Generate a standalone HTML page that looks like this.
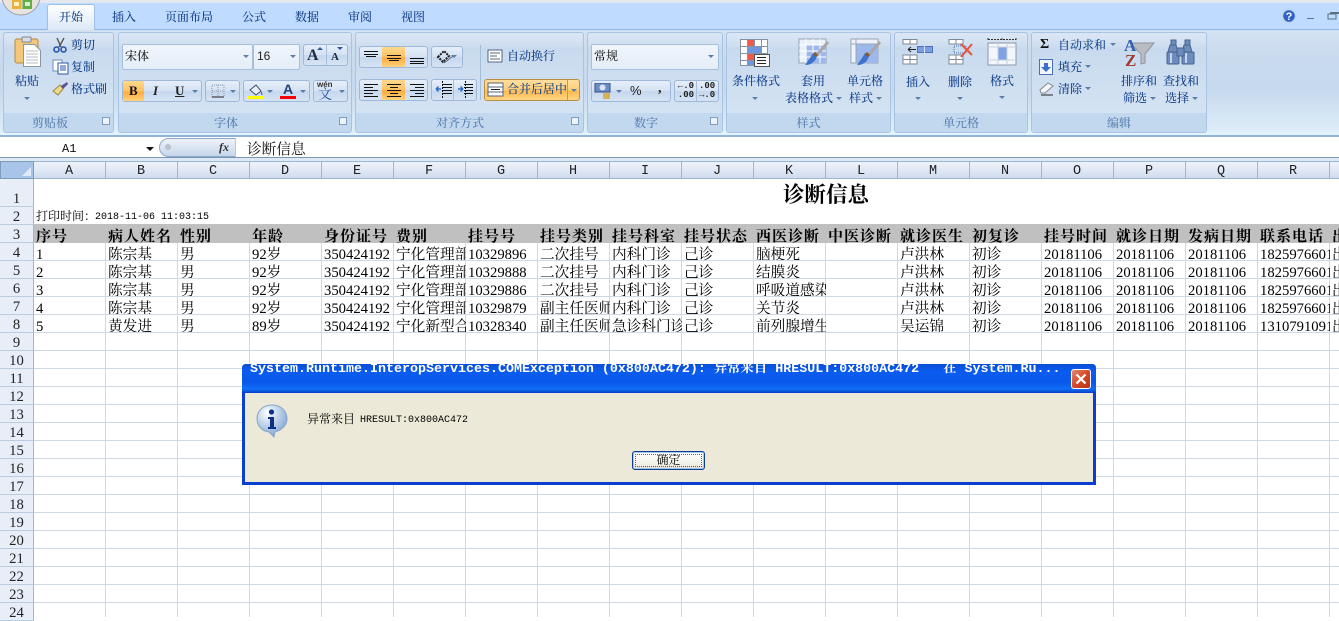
<!DOCTYPE html>
<html lang="zh"><head><meta charset="utf-8"><title>Excel</title>
<style>
html,body{margin:0;padding:0}
body{width:1339px;height:617px;overflow:hidden;position:relative;background:#fff;font-family:"Liberation Serif","Noto Serif CJK SC",serif}
.a{position:absolute}
.t{position:absolute;font-size:12px;line-height:14px;color:#15428b;white-space:nowrap;font-family:"Noto Serif CJK SC",serif;font-weight:500}
.tab{top:10px;color:#15428b}
.g{position:absolute;top:32px;height:101px;box-sizing:border-box;border:1px solid #a9c4e2;border-radius:3px;background:linear-gradient(#dbe7f5 0,#d0dff0 12px,#c8daee 15px,#d4e3f3 80px);overflow:hidden}
.g:after{content:"";position:absolute;left:0;right:0;bottom:0;height:19px;background:#c1d8ef}
.gl{top:116px;color:#5a7fb0;font-size:12px;text-align:center}
.cb{position:absolute;box-sizing:border-box;border:1px solid #a6bfdd;border-radius:2px;background:linear-gradient(#f0f5fc,#e4edf8)}
.bt{position:absolute;box-sizing:border-box;border:1px solid #9db8d8;border-radius:3px;background:linear-gradient(#e6eefa 0,#d5e2f3 50%,#c5d7ee 51%,#d6e3f4 100%)}
.on{position:absolute;background:linear-gradient(#ffd98e,#ffc060 50%,#ffab3e 55%,#ffd27c)}
.ar{position:absolute;width:0;height:0;border-left:3px solid transparent;border-right:3px solid transparent;border-top:3px solid #5b7fa8}
.dl{position:absolute;width:8px;height:8px;box-sizing:border-box;border:1px solid #7d9cc0;background:#eef3fa}
#sheet{position:absolute;left:34px;top:179px;width:1305px;height:438px;background-image:linear-gradient(90deg,transparent 71px,#d0d7e5 71px),linear-gradient(transparent 17px,#d0d7e5 17px);background-size:72px 18px;background-position:0 10px}
#sheet:before{content:"";position:absolute;left:0;right:0;top:0;height:45px;background:#fff}
.ch{position:absolute;top:161px;height:18px;width:72px;box-sizing:border-box;padding-right:1px;overflow:hidden;border-right:1px solid #9eb6ce;border-bottom:1px solid #9eb6ce;border-top:1px solid #9eb6ce;background:linear-gradient(#eef3fa,#dce6f4 60%,#cfdcee);text-align:center;font:13.5px/20px "Liberation Mono",monospace;color:#222}
.rh{position:absolute;left:0;width:34px;height:18px;box-sizing:border-box;overflow:hidden;border-bottom:1px solid #b8cce2;border-right:1px solid #9eb6ce;background:#e7eef8;text-align:center;font:14.67px/20px "Liberation Serif",serif;color:#222}
.r{position:absolute;left:34px;height:17px;width:1305px;display:flex;overflow:hidden;font-size:14.67px;line-height:22px;color:#000;font-family:"Noto Serif CJK SC",serif;white-space:nowrap}
.r span{width:72px;flex:none;overflow:hidden;box-sizing:border-box;padding-left:2px}
.r i{font-style:normal;font-family:"Liberation Serif",serif}
.h{background:#c0c0c0;height:19px;font-size:15px;letter-spacing:1px;line-height:23px;font-weight:700}
</style></head><body>

<!-- ribbon -->
<div class="a" style="left:0;top:0;width:1339px;height:30px;background:#bfdbff"></div>
<div class="a" style="left:0;top:0;width:1339px;height:3px;background:#e3e8ee"></div>
<div class="a" style="left:0;top:29px;width:1339px;height:108px;background:linear-gradient(#d3e2f3 0,#c9daee 30px,#c6d9ee 60px,#dcecf8 100px,#e3f3fb 104px)"></div>
<div class="a" style="left:0;top:29px;width:1339px;height:1px;background:#8db2e3"></div>
<div class="a" style="left:0;top:135px;width:1339px;height:2px;background:#8fb5d6"></div>

<!-- office button -->
<svg class="a" style="left:0;top:0" width="44" height="18"><circle cx="21" cy="-4" r="19" fill="#e8e4dc" stroke="#9aa0a8"/><rect x="12" y="0" width="9.500" height="9" fill="#e9b23c"/><rect x="22.500" y="0" width="9.500" height="9" fill="#5fae4a"/><rect x="14" y="2" width="5" height="4" fill="#fff3c4"/><rect x="25" y="2" width="5" height="4" fill="#d9f0c8"/></svg>

<!-- tabs -->
<div class="a" style="left:47px;top:4px;width:48px;height:26px;box-sizing:border-box;border:1px solid #9fc0e6;border-bottom:none;border-radius:3px 3px 0 0;background:linear-gradient(#fff,#dbe8f6)"></div>
<div class="t tab" style="left:59px">开始</div>
<div class="t tab" style="left:112px">插入</div>
<div class="t tab" style="left:165px">页面布局</div>
<div class="t tab" style="left:242px">公式</div>
<div class="t tab" style="left:295px">数据</div>
<div class="t tab" style="left:348px">审阅</div>
<div class="t tab" style="left:401px">视图</div>

<!-- window controls -->
<svg class="a" style="left:1280px;top:6px" width="59" height="20"><circle cx="9" cy="10" r="6.500" fill="#2f62c6" stroke="#bcd3f2" stroke-width="1.500"/><text x="9" y="14" font-size="11" font-weight="700" fill="#fff" text-anchor="middle" font-family="Liberation Sans">?</text><rect x="27" y="12" width="7" height="1" fill="#5d6f86"/><rect x="48" y="8" width="8" height="5" fill="none" stroke="#5d6f86"/><rect x="50" y="6" width="9" height="2" fill="#5d6f86"/></svg>

<!-- groups -->
<div class="g" style="left:3px;width:111px"></div>
<div class="g" style="left:118px;width:234px"></div>
<div class="g" style="left:355px;width:229px"></div>
<div class="g" style="left:587px;width:136px"></div>
<div class="g" style="left:726px;width:165px"></div>
<div class="g" style="left:894px;width:134px"></div>
<div class="g" style="left:1031px;width:176px"></div>

<div class="t gl" style="left:3px;width:94px">剪贴板</div>
<div class="t gl" style="left:118px;width:216px">字体</div>
<div class="t gl" style="left:355px;width:210px">对齐方式</div>
<div class="t gl" style="left:587px;width:118px">数字</div>
<div class="t gl" style="left:726px;width:165px">样式</div>
<div class="t gl" style="left:894px;width:134px">单元格</div>
<div class="t gl" style="left:1031px;width:176px">编辑</div>
<div class="dl" style="left:102px;top:117px"></div>
<div class="dl" style="left:339px;top:117px"></div>
<div class="dl" style="left:571px;top:117px"></div>
<div class="dl" style="left:710px;top:117px"></div>

<!-- clipboard -->
<svg class="a" style="left:14px;top:36px" width="28" height="33"><rect x="1" y="3" width="23" height="24" rx="2" fill="#f4c77b" stroke="#b98a3c"/><rect x="8" y="1" width="9" height="5" rx="1" fill="#d8dee8" stroke="#7d8794"/><path d="M9.500 8.500h11l6 6v16h-17z" fill="#fff" stroke="#8b97a6"/><path d="M12 15h12M12 18h12M12 21h12M12 24h12M12 27h12" stroke="#b5bcc7"/></svg>
<div class="t" style="left:15px;top:74px">粘贴</div>
<div class="ar" style="left:24px;top:97px"></div>
<svg class="a" style="left:52px;top:37px" width="17" height="17"><path d="M5 1l4 9M12 1L7 10" stroke="#555" stroke-width="1.400" fill="none"/><circle cx="4.500" cy="12.500" r="2.500" fill="none" stroke="#2a56a8" stroke-width="1.600"/><circle cx="11.500" cy="12.500" r="2.500" fill="none" stroke="#2a56a8" stroke-width="1.600"/></svg>
<svg class="a" style="left:52px;top:59px" width="17" height="16"><rect x="1" y="1" width="9" height="11" fill="#fff" stroke="#6f8db5"/><rect x="6" y="4" width="10" height="11" fill="#fff" stroke="#2a56a8"/><path d="M8 7h6M8 9h6M8 11h6" stroke="#2a56a8"/></svg>
<svg class="a" style="left:52px;top:81px" width="17" height="15"><path d="M1 10l7-6 3 4-5 6z" fill="#ecd98c" stroke="#a08a3c"/><path d="M9 5l6-4 1 2-5 5z" fill="#5a4f9a"/></svg>
<div class="t" style="left:71px;top:38px">剪切</div>
<div class="t" style="left:71px;top:60px">复制</div>
<div class="t" style="left:71px;top:82px">格式刷</div>

<!-- font -->
<div class="cb" style="left:122px;top:44px;width:131px;height:26px"></div>
<div class="cb" style="left:253px;top:44px;width:47px;height:26px"></div>
<div class="t" style="left:125px;top:49px;color:#222">宋体</div>
<div class="t" style="left:257px;top:49px;color:#222;font-family:'Liberation Sans'">16</div>
<div class="ar" style="left:243px;top:55px"></div><div class="ar" style="left:290px;top:55px"></div>
<div class="bt" style="left:303px;top:44px;width:45px;height:22px"></div>
<div class="a" style="left:326px;top:45px;width:1px;height:20px;background:#a9c0dc"></div>
<div class="a" style="left:307px;top:47px;font:700 16px/18px 'Liberation Serif';color:#1c2a44">A</div>
<div class="a" style="left:331px;top:51px;font:700 11px/13px 'Liberation Serif';color:#1c2a44">A</div>
<svg class="a" style="left:316px;top:46px" width="28" height="6"><path d="M1 4l3-3 3 3zM21 1h6l-3 3z" fill="#2a56a8"/></svg>

<div class="bt" style="left:122px;top:80px;width:80px;height:22px"></div>
<div class="on" style="left:123px;top:81px;width:21px;height:20px"></div>
<div class="a" style="left:129px;top:83px;font:700 13px/15px 'Liberation Serif';color:#111">B</div>
<div class="a" style="left:153px;top:83px;font:italic 700 13px/15px 'Liberation Serif';color:#222">I</div>
<div class="a" style="left:175px;top:83px;font:700 13px/15px 'Liberation Serif';color:#222;text-decoration:underline">U</div>
<div class="ar" style="left:192px;top:90px"></div>
<div class="bt" style="left:205px;top:80px;width:35px;height:22px"></div>
<svg class="a" style="left:211px;top:84px" width="14" height="14"><path d="M1 1h12v12H1zM1 7h12M7 1v12" fill="none" stroke="#8a97a8" stroke-dasharray="1 1"/><path d="M1 13h12" stroke="#222"/></svg>
<div class="ar" style="left:230px;top:90px"></div>
<div class="bt" style="left:243px;top:80px;width:67px;height:22px"></div>
<svg class="a" style="left:247px;top:83px" width="18" height="16"><path d="M3 7l6-5 5 6-5 4z" fill="#e8eef6" stroke="#44546c"/><path d="M14 8c1 2 2 3 1 4-1 0-1-2-1-4" fill="#2a56a8"/><rect y="13" width="16" height="3" fill="#ffff00" x="0"/></svg>
<div class="ar" style="left:267px;top:90px"></div>
<div class="a" style="left:283px;top:81px;font:700 14px/16px 'Liberation Sans';color:#23417a">A</div>
<div class="a" style="left:280px;top:96px;width:16px;height:3px;background:#f00"></div>
<div class="ar" style="left:300px;top:90px"></div>
<div class="bt" style="left:313px;top:80px;width:35px;height:22px"></div>
<div class="a" style="left:317px;top:81px;font:700 8px/8px 'Liberation Sans';color:#333">wén</div>
<div class="a" style="left:318px;top:87px;font:14px/14px 'Noto Serif CJK SC';color:#2a56a8">文</div>
<div class="ar" style="left:339px;top:90px"></div>

<!-- align -->
<div class="bt" style="left:359px;top:46px;width:69px;height:22px"></div>
<div class="on" style="left:382px;top:47px;width:23px;height:20px"></div>
<div class="bt" style="left:431px;top:46px;width:32px;height:22px"></div>
<svg class="a" style="left:436px;top:48px" width="20" height="18"><path d="M2 9l6-6 5 5-6 6z" fill="none" stroke="#222" stroke-width="2" stroke-dasharray="2 1"/><path d="M8 15l9-7" stroke="#5a6a80"/></svg>
<div class="ar" style="left:451px;top:55px"></div>
<div class="bt" style="left:359px;top:79px;width:69px;height:22px"></div>
<div class="on" style="left:382px;top:80px;width:23px;height:20px"></div>
<div class="bt" style="left:431px;top:79px;width:46px;height:22px"></div>
<div class="a" style="left:453px;top:80px;width:1px;height:20px;background:#a9c0dc"></div>
<svg class="a" style="left:359px;top:46px" width="120" height="56">
<g stroke="#111" fill="none"><path d="M5 5.500h14M5 8.500h14M7 10.500h10M28 9.500h14M28 12.500h14M30 14.500h10M51 12.500h14M51 15.500h14M51 17.500h14"/>
<path d="M5 38.500h14M5 41.500h9M5 44.500h14M5 47.500h9M5 50.500h14M28 38.500h14M31 41.500h8M28 44.500h14M31 47.500h8M28 50.500h14M51 38.500h14M56 41.500h9M51 44.500h14M56 47.500h9M51 50.500h14"/>
<path d="M84 38.500h9M84 41.500h9M84 44.500h9M84 47.500h9M105 38.500h9M105 41.500h9M105 44.500h9M105 47.500h9"/>
<path d="M83.500 35v18M106.500 35v18" stroke-dasharray="2 1"/></g>
<path d="M82 43h-5M77 43l2.500-2.500M77 43l2.500 2.500M99 43h5M104 43l-2.500-2.500M104 43l-2.500 2.500" stroke="#2a66c8" stroke-width="1.400" fill="none"/></svg>
<div class="a" style="left:480px;top:45px;width:1px;height:55px;background:#a3bddb"></div>
<svg class="a" style="left:487px;top:49px" width="17" height="15"><rect x="1" y="1" width="14" height="12" fill="#fff" stroke="#54657d"/><path d="M3 4h10M3 7h7M3 10h10" stroke="#54657d"/></svg>
<div class="t" style="left:507px;top:49px">自动换行</div>
<div class="a" style="left:484px;top:79px;width:96px;height:22px;box-sizing:border-box;border:1px solid #b98f45;border-radius:3px;background:linear-gradient(#ffdf9c,#ffcf78 50%,#ffb84f 55%,#ffd683)"></div>
<div class="a" style="left:567px;top:80px;width:1px;height:20px;background:#c79a4e"></div>
<svg class="a" style="left:487px;top:82px" width="17" height="15"><rect x="1" y="1" width="15" height="13" fill="#fff" stroke="#54657d"/><path d="M1 5h15M1 10h15" stroke="#54657d"/><path d="M4 7.500h9" stroke="#222"/></svg>
<div class="t" style="left:507px;top:82px">合并后居中</div>
<div class="ar" style="left:571px;top:89px"></div>

<!-- number -->
<div class="cb" style="left:591px;top:44px;width:128px;height:26px"></div>
<div class="t" style="left:594px;top:49px;color:#222">常规</div>
<div class="ar" style="left:708px;top:55px"></div>
<div class="bt" style="left:591px;top:80px;width:80px;height:22px"></div>
<svg class="a" style="left:594px;top:83px" width="18" height="16"><rect x="1" y="0" width="15" height="9" fill="#6d8cc2" stroke="#32507f"/><ellipse cx="8.500" cy="4.500" rx="3" ry="3" fill="#d8e4f4"/><path d="M9 11h7M9 13h7M9 15h7" stroke="#d9a520" stroke-width="1.500"/></svg>
<div class="ar" style="left:616px;top:90px"></div>
<div class="a" style="left:630px;top:84px;font:13px/14px 'Liberation Sans';color:#222">%</div>
<div class="a" style="left:658px;top:82px;font:700 14px/14px 'Liberation Serif';color:#222">,</div>
<div class="bt" style="left:674px;top:80px;width:45px;height:22px"></div>
<div class="a" style="left:696px;top:81px;width:1px;height:20px;background:#a9c0dc"></div>
<div class="a" style="left:677px;top:82px;font:700 9px/9px 'Liberation Mono';color:#222;text-align:right;width:17px">←.0<br>.00</div>
<div class="a" style="left:699px;top:82px;font:700 9px/9px 'Liberation Mono';color:#222;width:18px">.00<br>→.0</div>

<!-- styles -->
<svg class="a" style="left:739px;top:38px" width="32" height="29"><g stroke="#8793a3" fill="#fff"><rect x="1.500" y="1.500" width="7" height="7"/><rect x="8.500" y="1.500" width="7" height="7" fill="#ef5a4c"/><rect x="15.500" y="1.500" width="7" height="7"/><rect x="22.500" y="1.500" width="6" height="7"/><rect x="1.500" y="8.500" width="7" height="7"/><rect x="8.500" y="8.500" width="14" height="7" fill="#6f97dc"/><rect x="22.500" y="8.500" width="6" height="7"/><rect x="1.500" y="15.500" width="7" height="7"/><rect x="8.500" y="15.500" width="14" height="7" fill="#ef5a4c"/><rect x="1.500" y="22.500" width="7" height="5"/><rect x="8.500" y="22.500" width="7" height="5" fill="#6f97dc"/></g><rect x="15.500" y="16.500" width="15" height="12" fill="#fafafa" stroke="#555"/><path d="M18 19.500h9M18 22.500h9M18 25.500h9" stroke="#222"/></svg>
<svg class="a" style="left:798px;top:38px" width="32" height="29"><rect x="1" y="1" width="27" height="24" fill="#e9f0fa" stroke="#98a4b5"/><rect x="8" y="7" width="20" height="18" fill="#9db8ec"/><path d="M1 7h27M1 13h27M1 19h27M8 1v24M15 1v24M22 1v24" stroke="#fff"/><path d="M30 4L18 18" stroke="#a8a8a8" stroke-width="3"/><path d="M19 18l-4-3-3 5-5 7c5 0 10-2 12-9z" fill="#3f73c9"/><path d="M16 15l3 3" stroke="#8a5a2c" stroke-width="3"/></svg>
<svg class="a" style="left:850px;top:38px" width="32" height="29"><rect x="1" y="1" width="27" height="24" fill="#eef3fb" stroke="#98a4b5"/><rect x="6" y="6" width="22" height="19" fill="#9db8ec"/><path d="M1 6h27M6 1v24" stroke="#98a4b5"/><path d="M30 4L18 18" stroke="#a8a8a8" stroke-width="3"/><path d="M19 18l-4-3-3 5-5 7c5 0 10-2 12-9z" fill="#3f73c9"/><path d="M16 15l3 3" stroke="#8a5a2c" stroke-width="3"/></svg>
<div class="t" style="left:732px;top:74px">条件格式</div>
<div class="ar" style="left:752px;top:97px"></div>
<div class="t" style="left:801px;top:74px">套用</div>
<div class="t" style="left:785px;top:91px">表格格式</div>
<div class="ar" style="left:836px;top:97px"></div>
<div class="t" style="left:847px;top:74px">单元格</div>
<div class="t" style="left:849px;top:91px">样式</div>
<div class="ar" style="left:876px;top:97px"></div>

<!-- cells -->
<svg class="a" style="left:902px;top:38px" width="32" height="28"><g fill="#fff" stroke="#7f8a99"><path d="M1 1.500h14v4.500H1zM8 1.500v4.500M1 17h14v9H1zM1 21.500h14M8 17v9"/></g><rect x="15.500" y="8.500" width="15" height="6" fill="#7b9fe0" stroke="#4a70b5"/><path d="M22.500 8v7" stroke="#d8e4f4"/><path d="M6 11.500h8M6 11.500l3-2.500M6 11.500l3 2.500" stroke="#222" fill="none"/></svg>
<svg class="a" style="left:948px;top:38px" width="28" height="28"><g fill="#fff" stroke="#7f8a99"><path d="M1 1.500h14v4.500H1zM8 1.500v4.500M1 17h14v9H1zM1 21.500h14M8 17v9"/></g><rect x="6" y="8" width="12" height="7" fill="none" stroke="#4a70b5" stroke-dasharray="1 1"/><path d="M13 19L24 6M13 6l11 11" stroke="#e8533a" stroke-width="2"/></svg>
<svg class="a" style="left:986px;top:37px" width="32" height="30"><path d="M2 2.500h28M2 1v3M30 1v3M16 1v3" stroke="#333" stroke-dasharray="2 1"/><rect x="2" y="6" width="28" height="22" fill="#f3f6fb" stroke="#8b97a6"/><rect x="12" y="10" width="9" height="13" fill="#7ea2e4"/><path d="M2 10h28M2 23h28M12 6v22M21 6v22" stroke="#c9d2dd"/></svg>
<div class="t" style="left:906px;top:75px">插入</div><div class="ar" style="left:915px;top:97px"></div>
<div class="t" style="left:948px;top:75px">删除</div><div class="ar" style="left:957px;top:97px"></div>
<div class="t" style="left:990px;top:74px">格式</div><div class="ar" style="left:999px;top:96px"></div>

<!-- editing -->
<div class="a" style="left:1040px;top:37px;font:700 14px/16px 'Liberation Serif';color:#111">Σ</div>
<svg class="a" style="left:1039px;top:59px" width="15" height="16"><rect x="0.500" y="0.500" width="13" height="15" fill="#f2f6fc" stroke="#4a70b5"/><path d="M5 4h4v4h3l-5 5-5-5h3z" fill="#3a6fd0"/></svg>
<svg class="a" style="left:1038px;top:82px" width="17" height="14"><path d="M2 8l8-7 5 3-8 7H3z" fill="#f6f7f8" stroke="#7f8894"/><path d="M3 13h12" stroke="#222"/></svg>
<div class="t" style="left:1058px;top:38px">自动求和</div><div class="ar" style="left:1110px;top:43px"></div>
<div class="t" style="left:1058px;top:60px">填充</div><div class="ar" style="left:1085px;top:65px"></div>
<div class="t" style="left:1058px;top:82px">清除</div><div class="ar" style="left:1085px;top:87px"></div>
<svg class="a" style="left:1124px;top:37px" width="32" height="30"><path d="M6 6h24L21 17v9l-4 1V17z" fill="#b9bdc3" stroke="#8f959c"/><text x="0" y="14" font-family="Liberation Serif" font-weight="700" font-size="17" fill="#2f5fae">A</text><text x="1" y="29" font-family="Liberation Serif" font-weight="700" font-size="17" fill="#9c3a2e">Z</text></svg>
<svg class="a" style="left:1166px;top:39px" width="30" height="26"><g fill="#6d8cbd" stroke="#46648f"><rect x="1" y="13" width="12" height="12" rx="1"/><rect x="16" y="13" width="12" height="12" rx="1"/><path d="M4 6h6l2 7H2zM18 6h6l2 7H16z"/><rect x="11" y="9" width="7" height="8"/><rect x="5" y="1" width="5" height="5"/><rect x="19" y="1" width="5" height="5"/></g><path d="M5 14v10M20 14v10" stroke="#c6d5ea" stroke-width="2"/></svg>
<div class="t" style="left:1121px;top:74px">排序和</div>
<div class="t" style="left:1123px;top:91px">筛选</div><div class="ar" style="left:1150px;top:97px"></div>
<div class="t" style="left:1163px;top:74px">查找和</div>
<div class="t" style="left:1165px;top:91px">选择</div><div class="ar" style="left:1192px;top:97px"></div>

<!-- formula bar -->
<div class="a" style="left:0;top:138px;width:1339px;height:19px;background:#fff;border-bottom:1px solid #7c96b8"></div>
<div class="a" style="left:0;top:158px;width:1339px;height:3px;background:#dce8f6"></div>
<div class="a" style="left:62px;top:142px;font:12px/14px 'Liberation Mono';color:#111">A1</div>
<div class="a" style="left:146px;top:147px;border-left:4px solid transparent;border-right:4px solid transparent;border-top:4px solid #111"></div>
<div class="a" style="left:159px;top:138px;width:77px;height:19px;box-sizing:border-box;border-radius:10px 0 0 10px;border:1px solid #8ea8c8;background:linear-gradient(#eef3fa,#c6d6ea)"></div>
<div class="a" style="left:165px;top:144px;width:6px;height:6px;border-radius:50%;background:#b8c2cf"></div>
<div class="a" style="left:219px;top:140px;font:italic 700 12px/14px 'Liberation Serif';color:#333">fx</div>
<div class="a" style="left:235px;top:138px;width:1px;height:19px;background:#b9c8da"></div>
<div class="a" style="left:247px;top:140px;font:14.67px/18px 'Noto Serif CJK SC';color:#111">诊断信息</div>

<!-- sheet -->
<div id="sheet"></div>
<div class="a" style="left:0;top:161px;width:34px;height:18px;box-sizing:border-box;background:#a9c4e9;border:1px solid #7f9db9"></div>
<div class="a" style="left:22px;top:167px;width:0;height:0;border-left:9px solid transparent;border-bottom:9px solid #dfe9f7"></div>
<div class="ch" style="left:34px">A</div><div class="ch" style="left:106px">B</div><div class="ch" style="left:178px">C</div><div class="ch" style="left:250px">D</div><div class="ch" style="left:322px">E</div><div class="ch" style="left:394px">F</div><div class="ch" style="left:466px">G</div><div class="ch" style="left:538px">H</div><div class="ch" style="left:610px">I</div><div class="ch" style="left:682px">J</div><div class="ch" style="left:754px">K</div><div class="ch" style="left:826px">L</div><div class="ch" style="left:898px">M</div><div class="ch" style="left:970px">N</div><div class="ch" style="left:1042px">O</div><div class="ch" style="left:1114px">P</div><div class="ch" style="left:1186px">Q</div><div class="ch" style="left:1258px">R</div><div class="ch" style="left:1330px;width:9px;border-right:none"></div>

<div class="rh" style="top:179px;height:28px;line-height:41px">1</div>
<div class="rh" style="top:207px">2</div><div class="rh" style="top:225px">3</div><div class="rh" style="top:243px">4</div><div class="rh" style="top:261px">5</div><div class="rh" style="top:279px">6</div><div class="rh" style="top:297px">7</div><div class="rh" style="top:315px">8</div><div class="rh" style="top:333px">9</div><div class="rh" style="top:351px">10</div><div class="rh" style="top:369px">11</div><div class="rh" style="top:387px">12</div><div class="rh" style="top:405px">13</div><div class="rh" style="top:423px">14</div><div class="rh" style="top:441px">15</div><div class="rh" style="top:459px">16</div><div class="rh" style="top:477px">17</div><div class="rh" style="top:495px">18</div><div class="rh" style="top:513px">19</div><div class="rh" style="top:531px">20</div><div class="rh" style="top:549px">21</div><div class="rh" style="top:567px">22</div><div class="rh" style="top:585px">23</div><div class="rh" style="top:603px">24</div>

<div class="a" style="left:783px;top:181px;font:700 21.5px/26px 'Noto Serif CJK SC',serif;color:#000;white-space:nowrap">诊断信息</div>
<div class="a" style="left:36px;top:208px;font:12px/16px 'Noto Serif CJK SC',serif;color:#000;white-space:nowrap">打印时间：</div>
<div class="a" style="left:95px;top:210px;font:10px/16px 'Liberation Mono',monospace;color:#000;white-space:pre">2018-11-06 11:03:15</div>

<div class="r h" style="top:224px"><span>序号</span><span>病人姓名</span><span>性别</span><span>年龄</span><span>身份证号</span><span>费别</span><span>挂号号</span><span>挂号类别</span><span>挂号科室</span><span>挂号状态</span><span>西医诊断</span><span>中医诊断</span><span>就诊医生</span><span>初复诊</span><span>挂号时间</span><span>就诊日期</span><span>发病日期</span><span>联系电话</span><span>出</span></div>
<div class="r" style="top:243px"><span><i>1</i></span><span>陈宗基</span><span>男</span><span><i>92</i>岁</span><span><i>350424192</i></span><span>宁化管理部</span><span><i>10329896</i></span><span>二次挂号</span><span>内科门诊</span><span>己诊</span><span>脑梗死</span><span></span><span>卢洪林</span><span>初诊</span><span><i>20181106</i></span><span><i>20181106</i></span><span><i>20181106</i></span><span><i>18259766013</i></span><span>出</span></div>
<div class="r" style="top:261px"><span><i>2</i></span><span>陈宗基</span><span>男</span><span><i>92</i>岁</span><span><i>350424192</i></span><span>宁化管理部</span><span><i>10329888</i></span><span>二次挂号</span><span>内科门诊</span><span>己诊</span><span>结膜炎</span><span></span><span>卢洪林</span><span>初诊</span><span><i>20181106</i></span><span><i>20181106</i></span><span><i>20181106</i></span><span><i>18259766013</i></span><span>出</span></div>
<div class="r" style="top:279px"><span><i>3</i></span><span>陈宗基</span><span>男</span><span><i>92</i>岁</span><span><i>350424192</i></span><span>宁化管理部</span><span><i>10329886</i></span><span>二次挂号</span><span>内科门诊</span><span>己诊</span><span>呼吸道感染</span><span></span><span>卢洪林</span><span>初诊</span><span><i>20181106</i></span><span><i>20181106</i></span><span><i>20181106</i></span><span><i>18259766013</i></span><span>出</span></div>
<div class="r" style="top:297px"><span><i>4</i></span><span>陈宗基</span><span>男</span><span><i>92</i>岁</span><span><i>350424192</i></span><span>宁化管理部</span><span><i>10329879</i></span><span>副主任医师</span><span>内科门诊</span><span>己诊</span><span>关节炎</span><span></span><span>卢洪林</span><span>初诊</span><span><i>20181106</i></span><span><i>20181106</i></span><span><i>20181106</i></span><span><i>18259766013</i></span><span>出</span></div>
<div class="r" style="top:315px"><span><i>5</i></span><span>黄发进</span><span>男</span><span><i>89</i>岁</span><span><i>350424192</i></span><span>宁化新型合</span><span><i>10328340</i></span><span>副主任医师</span><span>急诊科门诊</span><span>己诊</span><span>前列腺增生</span><span></span><span>吴运锦</span><span>初诊</span><span><i>20181106</i></span><span><i>20181106</i></span><span><i>20181106</i></span><span><i>13107910913</i></span><span>出</span></div>

<!-- dialog -->
<div class="a" style="left:242px;top:364px;width:854px;height:121px;box-sizing:border-box;background:#0a3fd0;border-radius:4px 4px 0 0;overflow:hidden">
<div class="a" style="left:0;top:0;width:854px;height:28px;background:linear-gradient(#0a4ed8 0,#0a5cf0 8px,#0a58ea 18px,#0f6cf5 25px,#0a4cd0 28px)"></div>
<div class="a" style="left:8px;top:-2px;font:700 13.33px/16px 'Liberation Mono','Noto Serif CJK SC',serif;color:#fff;white-space:pre">System.Runtime.InteropServices.COMException (0x800AC472): 异常来目 HRESULT:0x800AC472   在 System.Ru...</div>
<div class="a" style="left:829px;top:5px;width:20px;height:20px;box-sizing:border-box;border:1px solid #fff;border-radius:3px;background:linear-gradient(135deg,#e88a6c,#d4492a 50%,#b83214)"></div>
<svg class="a" style="left:829px;top:5px" width="20" height="20"><path d="M5.500 5.500l9 9M14.500 5.500l-9 9" stroke="#fff" stroke-width="2.200"/></svg>
<div class="a" style="left:3px;top:29px;width:848px;height:89px;background:#ece9d8"></div>
</div>
<svg class="a" style="left:255px;top:403px" width="34" height="35"><defs><radialGradient id="bub" cx="35%" cy="25%" r="80%"><stop offset="0" stop-color="#fff"/><stop offset="1" stop-color="#7ba2d2"/></radialGradient></defs><path d="M17 2C8 2 2 8 2 16c0 7 5 12 12 13l5 5 1-5c7-2 12-7 12-13C32 8 26 2 17 2z" fill="url(#bub)" stroke="#8aa7c9"/><circle cx="16.500" cy="9" r="2.600" fill="#0e2f85"/><path d="M13 14h6v10h2v2h-8v-2h2v-8h-2z" fill="#0e2f85"/></svg>
<div class="a" style="left:307px;top:412px;font:12px/14px 'Noto Serif CJK SC',serif;color:#000;white-space:nowrap">异常来目</div>
<div class="a" style="left:360px;top:414px;font:10px/14px 'Liberation Mono',monospace;color:#000;white-space:nowrap">HRESULT:0x800AC472</div>
<div class="a" style="left:632px;top:451px;width:73px;height:19px;box-sizing:border-box;border:1px solid #0a3f8f;border-radius:3px;background:linear-gradient(#fff,#f3f2ea 70%,#dcd8c8);box-shadow:inset 0 0 0 1px #a9c6ee;text-align:center;font:12px/16px 'Noto Serif CJK SC',serif;color:#000">确定</div>
<div class="a" style="left:635px;top:454px;width:67px;height:13px;box-sizing:border-box;border:1px dotted #666"></div>

</body></html>
